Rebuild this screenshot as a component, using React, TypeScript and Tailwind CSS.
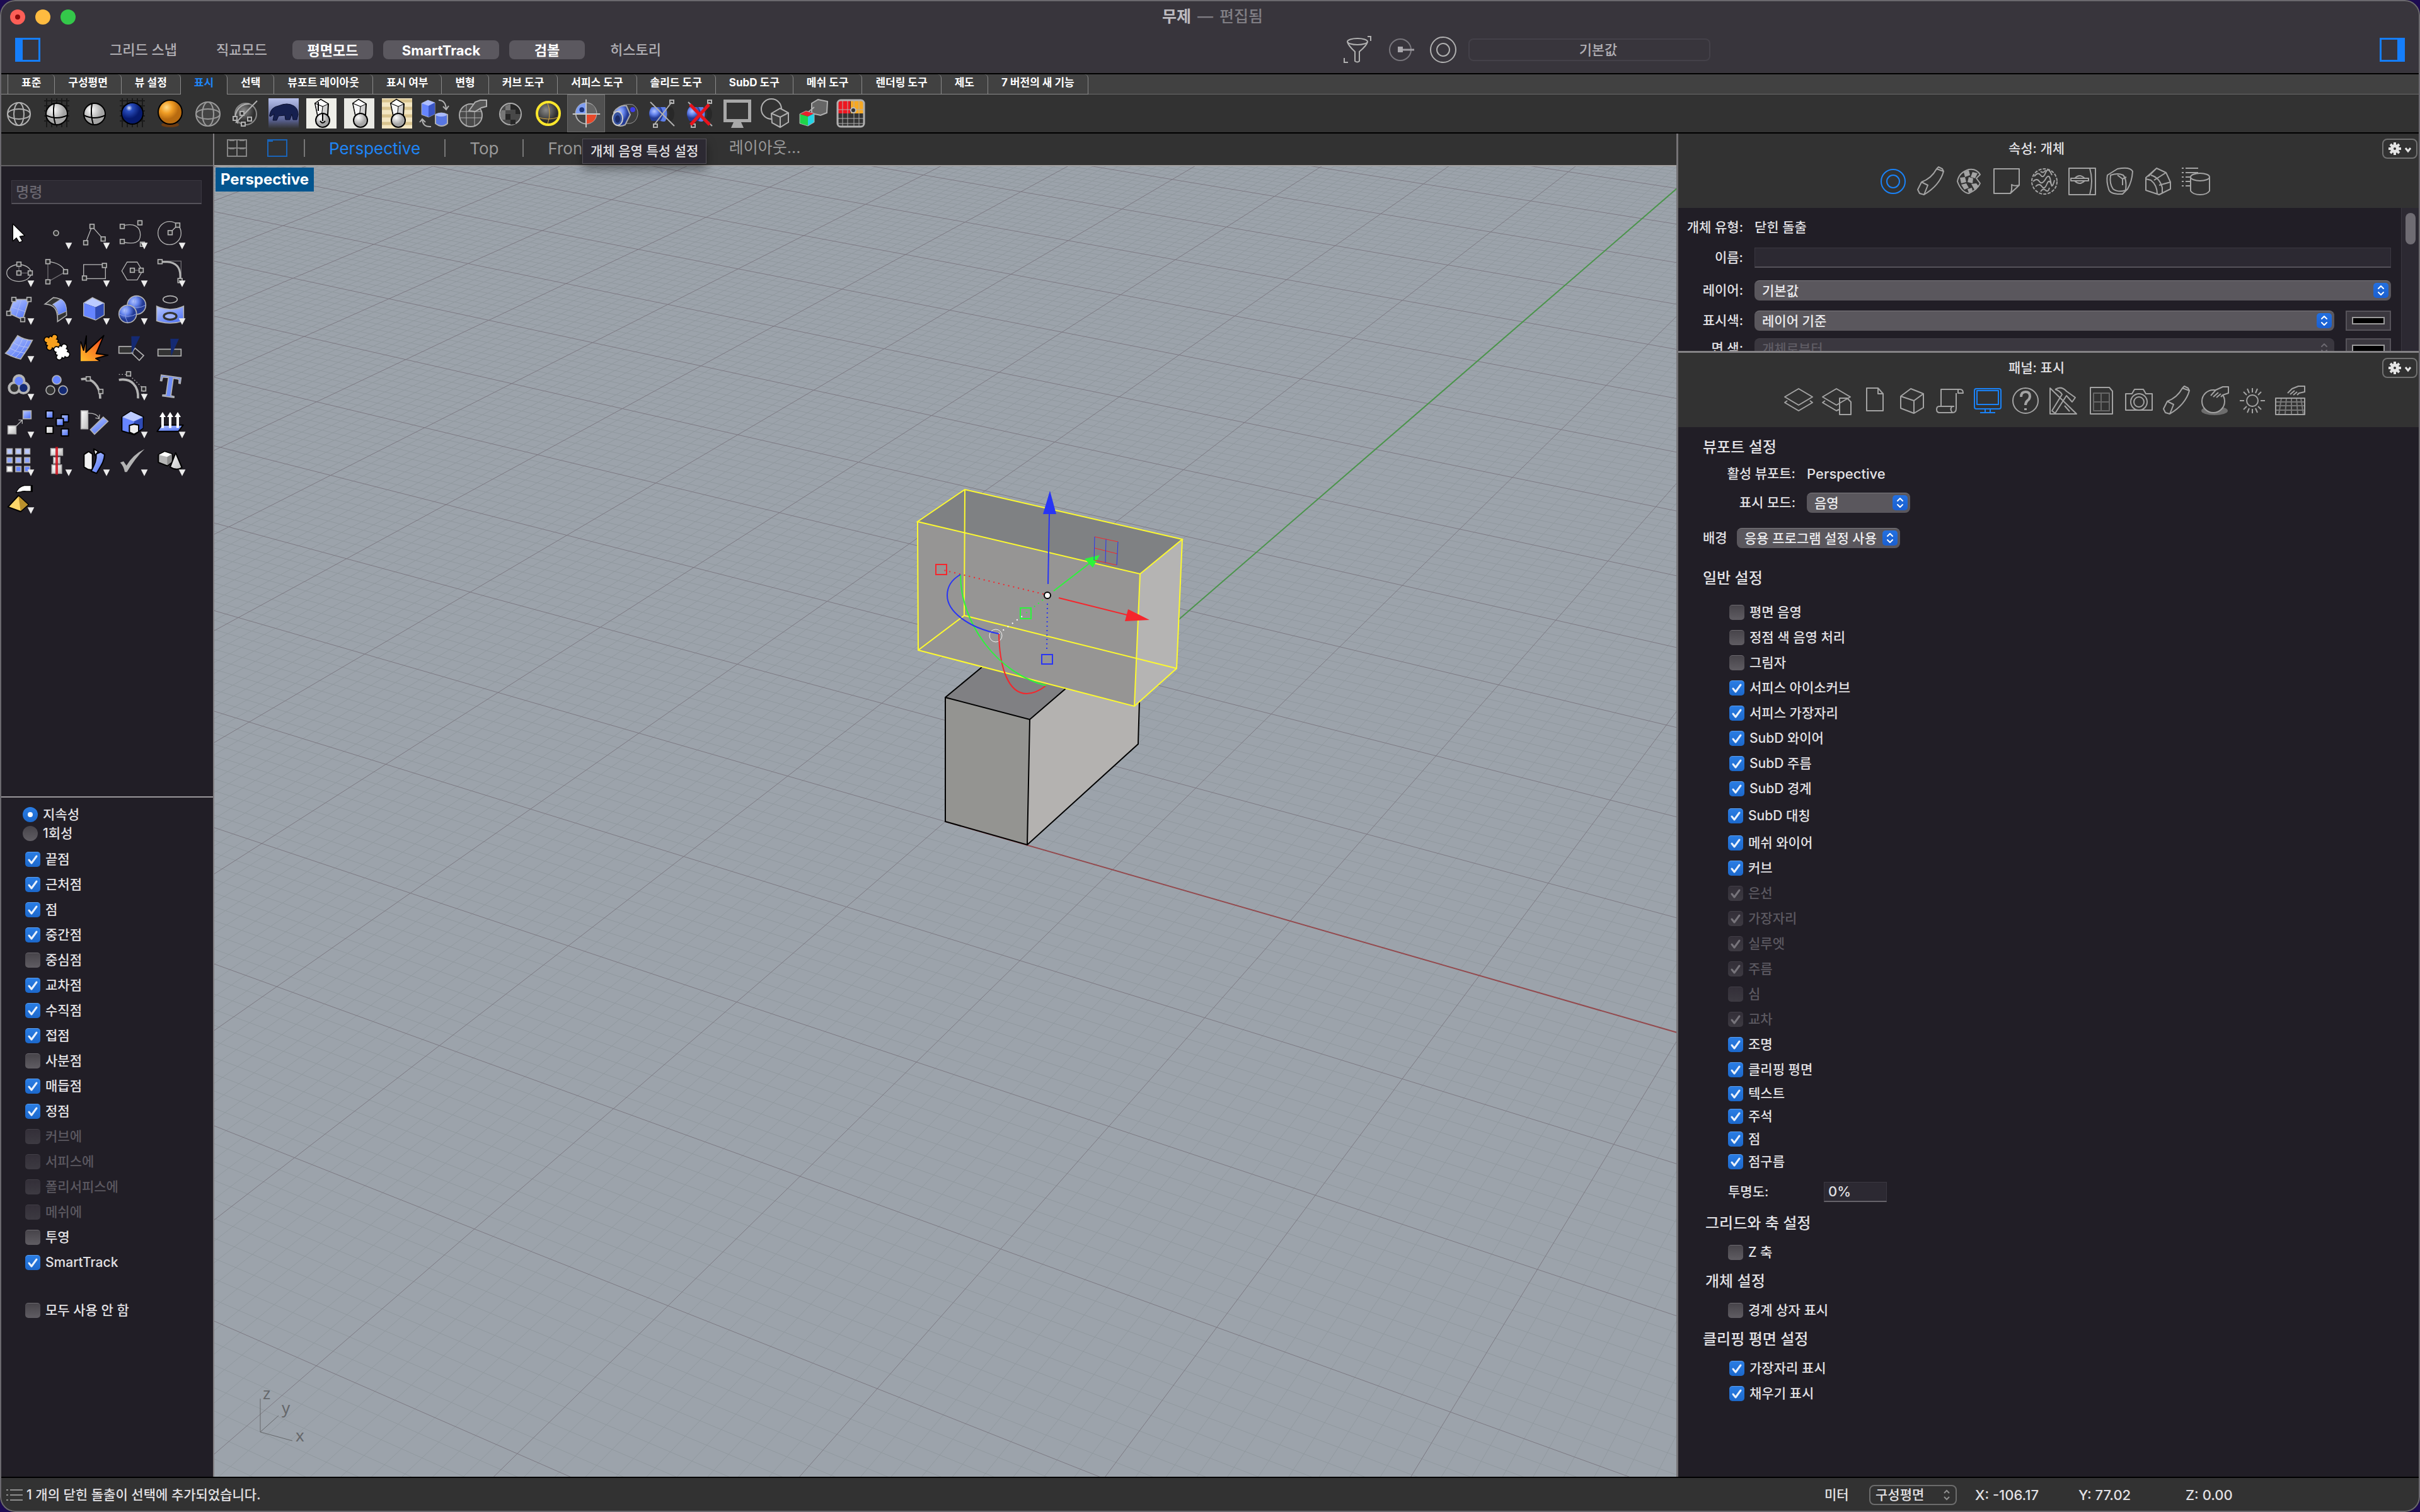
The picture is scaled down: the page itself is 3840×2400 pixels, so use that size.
import { useId, type ReactNode } from "react"

/* ---------- shared data ---------- */

const toolTabs = [
  "표준",
  "구성평면",
  "뷰 설정",
  "표시",
  "선택",
  "뷰포트 레이아웃",
  "표시 여부",
  "변형",
  "커브 도구",
  "서피스 도구",
  "솔리드 도구",
  "SubD 도구",
  "메쉬 도구",
  "렌더링 도구",
  "제도",
  "7 버전의 새 기능",
]

interface CheckItem {
  label: string
  checked?: boolean
  disabled?: boolean
}

const snapItems: CheckItem[] = [
  { label: "끝점", checked: true },
  { label: "근처점", checked: true },
  { label: "점", checked: true },
  { label: "중간점", checked: true },
  { label: "중심점" },
  { label: "교차점", checked: true },
  { label: "수직점", checked: true },
  { label: "접점", checked: true },
  { label: "사분점" },
  { label: "매듭점", checked: true },
  { label: "정점", checked: true },
  { label: "커브에", disabled: true },
  { label: "서피스에", disabled: true },
  { label: "폴리서피스에", disabled: true },
  { label: "메쉬에", disabled: true },
  { label: "투영" },
  { label: "SmartTrack", checked: true },
]

const shadingItems: CheckItem[] = [
  { label: "평면 음영" },
  { label: "정점 색 음영 처리" },
  { label: "그림자" },
  { label: "서피스 아이소커브", checked: true },
  { label: "서피스 가장자리", checked: true },
  { label: "SubD 와이어", checked: true },
  { label: "SubD 주름", checked: true },
  { label: "SubD 경계", checked: true },
]

const wireItems: CheckItem[] = [
  { label: "메쉬 와이어", checked: true },
  { label: "커브", checked: true },
  { label: "은선", checked: true, disabled: true },
  { label: "가장자리", checked: true, disabled: true },
  { label: "실루엣", checked: true, disabled: true },
  { label: "주름", checked: true, disabled: true },
  { label: "심", disabled: true },
  { label: "교차", checked: true, disabled: true },
  { label: "조명", checked: true },
  { label: "클리핑 평면", checked: true },
]

const annotationItems: CheckItem[] = [
  { label: "텍스트", checked: true },
  { label: "주석", checked: true },
  { label: "점", checked: true },
  { label: "점구름", checked: true },
]

/* ---------- form controls ---------- */

function CheckRow({ item, className = "h-10" }: { item: CheckItem; className?: string }) {
  return (
    <label className={`flex items-center gap-2 ${className} ${item.disabled ? "text-[#5b5860]" : "text-[#e2e1e4]"}`}>
      <span className="grid h-6 w-6 shrink-0">
        <input
          type="checkbox"
          defaultChecked={item.checked}
          disabled={item.disabled}
          className="peer h-6 w-6 appearance-none rounded-[5px] border-t border-[#6d6a70] bg-linear-to-b from-[#47444a] to-[#605d63] [grid-area:1/1] checked:border-[#5b9ff0] checked:from-[#2a7de4] checked:to-[#1c68cb] disabled:border-[#434048] disabled:from-[#332f38] disabled:to-[#3d3a42]"
        />
        <svg
          viewBox="0 0 24 24"
          className="pointer-events-none invisible h-6 w-6 text-[#e9f1fc] [grid-area:1/1] peer-checked:visible peer-disabled:text-[#77747b]"
        >
          <path d="M6 13l4 5 8-11" fill="none" stroke="currentColor" strokeWidth="3" strokeLinecap="round" strokeLinejoin="round" />
        </svg>
      </span>
      {item.label}
    </label>
  )
}

function RadioRow({ label, checked }: { label: string; checked?: boolean }) {
  return (
    <label className="flex h-[30px] items-center gap-2">
      <span className="grid h-6 w-6 place-items-center">
        <input
          type="radio"
          name="snap-mode"
          defaultChecked={checked}
          className="peer h-6 w-6 appearance-none rounded-full bg-linear-to-b from-[#47444a] to-[#605d63] [grid-area:1/1] checked:from-[#2a7de4] checked:to-[#1c68cb]"
        />
        <span className="pointer-events-none invisible h-2 w-2 rounded-full bg-white [grid-area:1/1] peer-checked:visible" />
      </span>
      {label}
    </label>
  )
}

interface PopupProps {
  value: string
  id?: string
  className?: string
  disabled?: boolean
}

function Popup({ value, id, className = "", disabled }: PopupProps) {
  return (
    <span className={`relative flex h-8 ${className}`}>
      <select
        id={id}
        disabled={disabled}
        className={`h-8 w-full appearance-none rounded-lg border-t pr-9 pl-3 leading-7 ${
          disabled ? "border-[#434048] bg-[#3a373f] text-[#5f5c64]" : "border-[#7b797e] bg-[#5a575d] text-[#ececee]"
        }`}
      >
        <option>{value}</option>
      </select>
      <span className={`pointer-events-none absolute top-1 right-1 h-6 w-6 rounded-[5px] ${disabled ? "" : "bg-linear-to-b from-[#2370e0] to-[#1b5fcf]"}`}>
        <svg viewBox="0 0 24 24" className="h-6 w-6">
          <path d="M8 9l4-4 4 4M8 15l4 4 4-4" fill="none" stroke={disabled ? "#6b686f" : "#fff"} strokeWidth="2" strokeLinecap="round" strokeLinejoin="round" />
        </svg>
      </span>
    </span>
  )
}

/* ---------- tool palette (180 unit cells, drawn at 60px) ---------- */

const line = { fill: "none", stroke: "#b3b3b3", strokeWidth: 4 }
const dim = { fill: "none", stroke: "#6f6d72", strokeWidth: 4 }
const outline = { stroke: "#b3b3b3", strokeWidth: 5 }
const ink = { stroke: "#000", strokeWidth: 6, strokeLinejoin: "round" as const }

function Knot({ x, y }: { x: number; y: number }) {
  return <rect x={x - 10} y={y - 10} width="20" height="20" fill="#2a2a2c" stroke="#b3b3b3" strokeWidth="5" />
}

function PuzzlePiece({ x, y, color }: { x: number; y: number; color: string }) {
  const shape = (
    <>
      <rect x="-21" y="-21" width="42" height="42" rx="3" />
      <circle cx="0" cy="-27" r="11" />
      <circle cx="-27" cy="0" r="11" />
      <circle cx="27" cy="0" r="11" />
      <circle cx="0" cy="27" r="11" />
    </>
  )
  return (
    <g transform={`translate(${x} ${y}) rotate(26)`} fill={color}>
      <g stroke="#000" strokeWidth="10">
        {shape}
      </g>
      {shape}
    </g>
  )
}

const palette: { name: string; menu?: boolean; art: ReactNode }[] = [
  { name: "선택", art: <path d="M61 46v82l17-15 14 22 15-7-13-22 24-4z" fill="#fff" {...ink} strokeWidth={4} /> },
  { name: "점", menu: true, art: <circle cx="87" cy="90" r="12" fill="#333" {...outline} /> },
  {
    name: "폴리라인",
    menu: true,
    art: (
      <>
        <path d="M48 136L78 58l53 60" {...line} />
        <Knot x={78} y={58} />
        <Knot x={48} y={136} />
        <Knot x={131} y={118} />
      </>
    ),
  },
  {
    name: "커브",
    menu: true,
    art: (
      <>
        <path d="M42 56C100 38 128 62 128 98S100 146 42 132" {...line} />
        <Knot x={42} y={58} />
        <Knot x={42} y={130} />
        <Knot x={126} y={41} />
        <Knot x={138} y={143} />
      </>
    ),
  },
  {
    name: "원",
    menu: true,
    art: (
      <>
        <circle cx="87" cy="90" r="55" {...line} />
        <path d="M90 88l36-36" {...line} />
        <Knot x={126} y={52} />
        <Knot x={90} y={88} />
      </>
    ),
  },
  {
    name: "타원",
    menu: true,
    art: (
      <>
        <ellipse cx="90" cy="100" rx="58" ry="40" {...line} />
        <path d="M90 58v42h54" {...dim} />
        <Knot x={90} y={58} />
        <Knot x={90} y={100} />
        <Knot x={144} y={100} />
      </>
    ),
  },
  {
    name: "호",
    menu: true,
    art: (
      <>
        <path d="M48 46v96l84-48" {...dim} />
        <path d="M48 46q62 4 84 48" {...line} />
        <Knot x={48} y={46} />
        <Knot x={48} y={142} />
        <Knot x={132} y={94} />
      </>
    ),
  },
  {
    name: "직사각형",
    menu: true,
    art: (
      <>
        <rect x="38" y="60" width="104" height="67" {...line} />
        <Knot x={137} y={64} />
        <Knot x={42} y={124} />
      </>
    ),
  },
  {
    name: "다각형",
    menu: true,
    art: (
      <>
        <path d="M40 90l25-42h48l25 42-25 43H65z" {...line} />
        <path d="M90 87h42" {...dim} />
        <Knot x={90} y={87} />
        <Knot x={132} y={87} />
      </>
    ),
  },
  {
    name: "필렛",
    menu: true,
    art: (
      <>
        <path d="M42 43h100v92" {...dim} />
        <path d="M42 47h34q62 4 62 66v20" {...line} strokeWidth={9} />
        <Knot x={42} y={46} />
        <Knot x={137} y={136} />
      </>
    ),
  },
  {
    name: "서피스",
    menu: true,
    art: (
      <>
        <path d="M66 46h72l-30 96-66-30z" fill="url(#blue)" {...outline} />
        <path d="M102 46L76 128M54 82l66 22" {...line} strokeWidth={3} stroke="#a9b8f5" />
        <Knot x={66} y={46} />
        <Knot x={138} y={46} />
        <Knot x={108} y={142} />
        <Knot x={42} y={112} />
      </>
    ),
  },
  {
    name: "로프트",
    menu: true,
    art: (
      <>
        <path d="M34 68l40-31c46 2 63 28 63 85l-43 29c2-56-14-80-60-83z" fill="#333" {...outline} />
        <path d="M70 70l40-26c18 9 26 26 27 58l-40 18c-3-22-10-40-27-50z" fill="url(#blue)" {...outline} strokeWidth={3} />
      </>
    ),
  },
  {
    name: "상자",
    menu: true,
    art: (
      <>
        <path d="M38 63l42-26 56 27-41 19z" fill="#bccbff" />
        <path d="M38 63l57 20v61l-57-20z" fill="#6685ff" />
        <path d="M95 83l41-19v56l-41 24z" fill="#2f4bb5" />
        <path d="M38 63l42-26 56 27v56l-41 24-57-20z" {...line} />
      </>
    ),
  },
  {
    name: "구",
    menu: true,
    art: (
      <>
        <circle cx="110" cy="73" r="44" fill="url(#ball)" {...outline} />
        <path d="M66 73q44 24 88 0M110 29q-26 44 0 88" {...line} strokeWidth={3} stroke="#8ca0e8" />
        <circle cx="68" cy="115" r="42" fill="url(#ball)" {...outline} />
        <path d="M26 115q42 24 84 0M68 73q-24 42 0 84" {...line} strokeWidth={3} stroke="#8ca0e8" />
      </>
    ),
  },
  {
    name: "구멍",
    menu: true,
    art: (
      <>
        <ellipse cx="90" cy="46" rx="34" ry="17" {...line} strokeWidth={5} />
        <path d="M26 78q64 30 128 0v70q-64 22-128 0z" fill="url(#blue)" {...outline} />
        <ellipse cx="90" cy="126" rx="30" ry="16" fill="#9db0ff" stroke="#333" strokeWidth="10" />
      </>
    ),
  },
  {
    name: "메쉬",
    menu: true,
    art: (
      <>
        <path d="M84 38q36 22 70 22l-18 34-38 56q-34-8-72-28 20-18 30-42z" fill="url(#blue)" {...outline} />
        <path d="M108 52q-20 50-58 84M132 58q-20 50-60 86M62 70q30 22 72 24M46 98q34 20 74 24" {...line} strokeWidth={3} stroke="#b6c4f7" />
      </>
    ),
  },
  {
    name: "결합",
    art: (
      <>
        <PuzzlePiece x={68} y={70} color="#f7a01e" />
        <PuzzlePiece x={114} y={116} color="#fff" />
      </>
    ),
  },
  {
    name: "분해",
    art: (
      <>
        <path d="M24 160V66l14 42 13-68-2 78 85-80-36 86 56 7-58 16 20 12z" fill="url(#fire)" />
        <path d="M24 66l14 42 13-68-2 78 85-80-36 86 56 7-58 16 20 12" fill="none" {...ink} />
      </>
    ),
  },
  {
    name: "트림",
    art: (
      <>
        <rect x="26" y="90" width="66" height="32" fill="#333" {...outline} />
        <path d="M103 98l41 35-21 23-37-36z" {...line} strokeWidth={5} />
        <path d="M85 41h42l-40 83z" fill="#142a73" />
      </>
    ),
  },
  {
    name: "분할",
    art: (
      <>
        <rect x="32" y="103" width="110" height="32" fill="#333" {...outline} />
        <path d="M91 53h41L95 135z" fill="#142a73" />
      </>
    ),
  },
  {
    name: "그룹",
    menu: true,
    art: (
      <>
        <g stroke="#b3b3b3" strokeWidth="22">
          <circle cx="90" cy="73" r="20" />
          <circle cx="68" cy="107" r="20" />
          <circle cx="112" cy="107" r="20" />
        </g>
        <circle cx="68" cy="107" r="19" fill="#333" />
        <circle cx="112" cy="107" r="19" fill="#142a73" />
        <circle cx="90" cy="74" r="20" fill="#6685ff" />
      </>
    ),
  },
  {
    name: "그룹 해제",
    art: (
      <>
        <circle cx="90" cy="69" r="21" fill="#6685ff" {...outline} />
        <circle cx="60" cy="118" r="21" fill="#333" {...outline} />
        <circle cx="120" cy="118" r="21" fill="#142a73" {...outline} />
      </>
    ),
  },
  {
    name: "점 편집",
    art: (
      <>
        <path d="M26 66c50-10 92 30 91 92" {...line} strokeWidth={11} />
        <Knot x={60} y={64} />
        <Knot x={120} y={124} />
      </>
    ),
  },
  {
    name: "제어점",
    menu: true,
    art: (
      <>
        <path d="M26 69c60-10 94 30 91 88" {...line} strokeWidth={11} />
        <path d="M26 43h46l72 69v46" {...line} strokeDasharray="5 9" />
        <Knot x={72} y={40} />
        <Knot x={144} y={112} />
      </>
    ),
  },
  {
    name: "텍스트",
    art: (
      <text x="88" y="150" textAnchor="middle" transform="rotate(8 88 100)" className="font-['Liberation_Serif'] text-[150px] font-bold" fill="#6f8df8" stroke="#b3b3b3" strokeWidth="5">
        T
      </text>
    ),
  },
  {
    name: "이동",
    menu: true,
    art: (
      <>
        <rect x="38" y="108" width="38" height="38" fill="url(#white)" {...outline} />
        <rect x="110" y="36" width="38" height="38" fill="url(#blue)" {...outline} />
        <path d="M76 110l30-30M88 80h18v18" {...line} />
      </>
    ),
  },
  {
    name: "복사",
    art: (
      <g {...ink}>
        <rect x="39" y="37" width="34" height="34" fill="url(#blue)" />
        <rect x="112" y="55" width="34" height="34" fill="url(#blue)" />
        <rect x="88" y="73" width="34" height="34" fill="url(#blue)" />
        <rect x="39" y="110" width="34" height="34" fill="url(#white)" />
        <rect x="112" y="122" width="34" height="34" fill="url(#blue)" />
      </g>
    ),
  },
  {
    name: "회전",
    art: (
      <>
        <rect x="26" y="36" width="32" height="86" fill="url(#white)" {...outline} />
        <path d="M132 66l22 20-64 62-20-22z" fill="url(#blue)" {...outline} />
        <path d="M58 48q42-2 54 24M94 70l18 4 2-20" {...line} />
      </>
    ),
  },
  {
    name: "불리언",
    menu: true,
    art: (
      <>
        <path d="M40 66l43-28 59 27-2 55-40 30-60-18z" fill="#6685ff" {...ink} />
        <path d="M42 66l41-26 57 26-44 20z" fill="#bccbff" />
        <path d="M98 88l42-20v50l-42 26z" fill="#2f4bb5" />
        <path d="M76 106l22-6 22 4v32l-22 12-22-10z" fill="#eee" {...ink} />
      </>
    ),
  },
  {
    name: "노멀",
    menu: true,
    art: (
      <>
        <path d="M50 104h102l-22 30H28z" fill="url(#blue)" {...ink} />
        <path d="M54 118V62M90 118V62M126 118V62" stroke="#fff" strokeWidth="12" />
        <path d="M39 66l15-24 15 24zM75 66l15-24 15 24zM111 66l15-24 15 24z" fill="#fff" />
      </>
    ),
  },
  {
    name: "배열",
    menu: true,
    art: (
      <g {...outline}>
        <rect x="33" y="37" width="25" height="25" fill="#b9c7ff" />
        <rect x="75" y="37" width="25" height="25" fill="#b9c7ff" />
        <rect x="117" y="37" width="25" height="25" fill="#b9c7ff" />
        <rect x="33" y="79" width="25" height="25" fill="#8ea5ff" />
        <rect x="75" y="79" width="25" height="25" fill="#9db0ff" />
        <rect x="117" y="79" width="25" height="25" fill="#8ea5ff" />
        <rect x="33" y="121" width="25" height="25" fill="#f4f4f4" />
        <rect x="75" y="121" width="25" height="25" fill="#6685ff" />
        <rect x="117" y="121" width="25" height="25" fill="#6685ff" />
      </g>
    ),
  },
  {
    name: "정렬",
    menu: true,
    art: (
      <>
        <rect x="62" y="36" width="56" height="32" fill="url(#white)" {...outline} />
        <rect x="75" y="78" width="30" height="28" fill="url(#white)" {...outline} />
        <rect x="67" y="114" width="46" height="40" fill="url(#white)" {...outline} />
        <path d="M90 28v132" stroke="#d0101c" strokeOpacity=".85" strokeWidth="12" />
      </>
    ),
  },
  {
    name: "변형",
    menu: true,
    art: (
      <>
        <path d="M40 64l22-14 18 12v76l-20-2-20-12z" fill="#f1f1f1" {...ink} />
        <path d="M86 38l22 12-16 20z" fill="#eee" {...ink} />
        <path d="M98 62l22-10 18 12c-2 36-18 54-38 90l-26-10c14-30 26-48 24-82z" fill="url(#blue)" {...ink} />
      </>
    ),
  },
  { name: "확인", menu: true, art: <path d="M32 103l16-6 14 20q30-52 86-79-44 42-84 110H54q-6-30-22-45z" fill="#b3b3b3" /> },
  {
    name: "분석",
    menu: true,
    art: (
      <>
        <path d="M34 66l30-16 36 12v38l-24 18-42-16z" fill="#b5b5b5" {...ink} />
        <path d="M36 66l28-14 34 11-22 13z" fill="#fff" />
        <path d="M76 76l22-13v36l-22 17z" fill="#8c8c8c" />
        <path d="M116 56l30 70q-24 18-56-2z" fill="url(#white)" {...ink} />
      </>
    ),
  },
  {
    name: "피라미드",
    menu: true,
    art: (
      <>
        <path d="M76 66q14-30 40-34h38v28h-28q-16-2-26 2z" fill="#fff" {...ink} strokeWidth={4} />
        <path d="M146 30h10v32h-10z" />
        <path d="M88 80l47 43-37 33-60-22z" fill="#fcd76a" {...ink} />
        <path d="M88 82l45 41-35 31z" fill="#b9902c" />
      </>
    ),
  },
]

function PaletteDefs() {
  return (
    <svg className="absolute h-0 w-0" aria-hidden="true">
      <defs>
        <linearGradient id="blue" x1="0" y1="0" x2=".7" y2="1">
          <stop offset="0" stopColor="#b9c8ff" />
          <stop offset="1" stopColor="#5476f5" />
        </linearGradient>
        <linearGradient id="white" x1="0" y1="0" x2="1" y2="1">
          <stop offset="0" stopColor="#fff" />
          <stop offset="1" stopColor="#bdbdbd" />
        </linearGradient>
        <linearGradient id="fire" x1="0" y1="1" x2="1" y2="0">
          <stop offset="0" stopColor="#ffbf2b" />
          <stop offset=".9" stopColor="#f3431c" />
        </linearGradient>
        <linearGradient id="sky" x1="0" y1="0" x2="0" y2="1">
          <stop offset="0" stopColor="#b7c0ea" />
          <stop offset=".7" stopColor="#5c6598" />
          <stop offset="1" stopColor="#323232" />
        </linearGradient>
        <radialGradient id="ball" cx=".35" cy=".3">
          <stop offset="0" stopColor="#b4c6ff" />
          <stop offset=".5" stopColor="#6685ee" />
          <stop offset="1" stopColor="#233a94" />
        </radialGradient>
        <radialGradient id="pearl" cx=".35" cy=".3">
          <stop offset="0" stopColor="#fff" />
          <stop offset="1" stopColor="#a5a5a5" />
        </radialGradient>
        <radialGradient id="navy" cx=".35" cy=".25">
          <stop offset="0" stopColor="#dfe8ff" />
          <stop offset=".3" stopColor="#2a4fc0" />
          <stop offset="1" stopColor="#061a6e" />
        </radialGradient>
        <radialGradient id="orange" cx=".35" cy=".3">
          <stop offset="0" stopColor="#ffdc8a" />
          <stop offset=".5" stopColor="#f09d25" />
          <stop offset="1" stopColor="#b86b10" />
        </radialGradient>
        <radialGradient id="steel" cx=".4" cy=".35">
          <stop offset="0" stopColor="#8a8a8a" />
          <stop offset="1" stopColor="#2e2e2e" />
        </radialGradient>
      </defs>
    </svg>
  )
}

/* ---------- display toolbar (60 unit cells) ---------- */

const gray = { fill: "none", stroke: "#b0b0b0", strokeWidth: 2 }
const black = { stroke: "#000", strokeWidth: 2, fill: "none" }
const hatch = <path d="M10 10h40M10 18h40M10 26h40M10 34h40M10 42h40M14 6v46M22 6v46M30 6v46M38 6v46M46 6v46" stroke="#1b1b1b" strokeWidth="2" />

function PenAndBall({ bg, striped, sketchy }: { bg: string; striped?: boolean; sketchy?: boolean }) {
  return (
    <>
      <path d="M6 6h48v48H6z" fill={bg} />
      {striped && <path d="M6 10h48M6 22h48M6 34h48M6 46h48" stroke="#d9c48f" strokeWidth="5" />}
      <path d="M20 14l9-6 12 7-1 18-9 4-7-4z" fill="#d2d2d2" stroke="#000" strokeWidth="2" />
      <path d="M20 14l12 5-2 18-6-4z" fill="#f7f7f7" stroke="#000" />
      <path d="M20 14l9-6 12 7-9 4z" fill="#fff" stroke="#000" />
      <circle cx="32" cy="41" r="11" fill="url(#pearl)" stroke="#000" strokeWidth="2" />
      {sketchy && <path d="M32 30v12M28 42q4 6 8 0M25 12v14" {...black} />}
    </>
  )
}

const cylinder = (
  <>
    <path d="M14 20q-8 10 0 22h16q7-11 0-22z" fill="url(#ball)" />
    <path d="M28 20q8 11 0 22 6 2 8 0 5-11 0-22z" fill="#5d7ee8" />
    <path d="M36 20q12 11 0 22h10q8-11 0-22z" fill="#222" opacity=".6" />
  </>
)

const displayTools: { name: string; active?: boolean; art: ReactNode }[] = [
  {
    name: "와이어프레임",
    art: (
      <g {...gray}>
        <circle cx="30" cy="31" r="18" />
        <ellipse cx="30" cy="31" rx="8" ry="18" />
        <ellipse cx="30" cy="31" rx="18" ry="8" />
      </g>
    ),
  },
  {
    name: "음영",
    art: (
      <>
        {hatch}
        <circle cx="30" cy="31" r="17" fill="url(#pearl)" stroke="#000" strokeWidth="2" />
        <path d="M26 14q-3 17 2 34M13 33q17 8 34 0" {...black} />
      </>
    ),
  },
  {
    name: "모든 뷰포트 음영",
    art: (
      <>
        <circle cx="30" cy="31" r="17" fill="url(#pearl)" stroke="#000" strokeWidth="2" />
        <path d="M26 14q-3 17 2 34M13 33q17 8 34 0" {...black} />
      </>
    ),
  },
  {
    name: "렌더링",
    art: (
      <>
        {hatch}
        <circle cx="30" cy="30" r="17" fill="url(#navy)" stroke="#000" strokeWidth="2" />
      </>
    ),
  },
  {
    name: "모든 뷰포트 렌더링",
    art: (
      <>
        <ellipse cx="30" cy="48" rx="14" ry="4" fill="#6d3c12" />
        <circle cx="30" cy="28" r="19" fill="url(#orange)" stroke="#000" strokeWidth="2" />
      </>
    ),
  },
  {
    name: "고스트",
    art: (
      <g {...gray} stroke="#999">
        <circle cx="30" cy="31" r="19" fill="#444" />
        <ellipse cx="30" cy="31" rx="9" ry="19" />
        <ellipse cx="30" cy="31" rx="19" ry="8" />
      </g>
    ),
  },
  {
    name: "엑스레이",
    art: (
      <g {...gray}>
        <circle cx="30" cy="31" r="17" fill="url(#steel)" stroke="#888" />
        <path d="M18 46q-8-8-2-20 7-12 20-11M14 45L48 10" />
        <path d="M21 27h6v6h-6zM33 36h6v6h-6zM10 35h6v6h-6zM23 44h6v6h-6z" fill="#333" />
      </g>
    ),
  },
  {
    name: "북극",
    art: (
      <>
        <path d="M6 6h48v48H6z" fill="url(#sky)" />
        <path d="M8 32q2-12 14-14 14-6 24 0 7 4 7 14l-2 8h-6l-2-9-3 9h-7l-1-7-10 1-3 7h-6l2-10-6 4q-2 0-1-3z" fill="#16204f" stroke="#0a0f2c" />
      </>
    ),
  },
  { name: "펜", art: <PenAndBall bg="#efefe9" sketchy /> },
  { name: "테크니컬", art: <PenAndBall bg="#e9e9e4" /> },
  { name: "아티스틱", art: <PenAndBall bg="#f3e6c2" striped /> },
  {
    name: "개체 표시 모드",
    art: (
      <>
        <path d="M9 14l10-5 11 4v18l-10 5-11-4z" fill="#6685ff" stroke="#b0b0b0" />
        <path d="M9 14l10-5 11 4-10 5z" fill="#aebeff" />
        <path d="M20 18l10-5v18l-10 5z" fill="#3a55c4" />
        <path d="M31 32q9-5 19 0v14q-9 8-19 0z" fill="#5877e2" stroke="#b0b0b0" strokeWidth="2" />
        <ellipse cx="40" cy="32" rx="9" ry="3" fill="#a9bafb" />
        <path d="M36 9q11 0 12 14M43 19l5 5 4-6M24 51Q11 52 10 40M6 44l4-5 5 5" {...gray} />
      </>
    ),
  },
  {
    name: "표시 모드 설정",
    art: (
      <>
        <circle cx="27" cy="33" r="18" fill="#4a4a4a" stroke="#aaa" strokeWidth="2" />
        <path d="M10 27h34M9 37h36M20 16v35M33 17v33" {...gray} strokeWidth={1} />
        <path d="M24 26l10-14 8-3h10v10l-8 2-10 6z" fill="#555" stroke="#b0b0b0" strokeWidth="2" />
      </>
    ),
  },
  {
    name: "플랫 음영",
    art: (
      <>
        <circle cx="30" cy="31" r="17" fill="#484848" stroke="#aaa" strokeWidth="2" />
        <path d="M22 18l8-3v10h-8zM14 31h8v9h-6l-2-6zM22 25h-6l-2 6h8z" fill="#777" />
        <path d="M30 15q15 2 16 16h-8v-7h-8zM22 31h8v9h-8zM30 40h8v7l-8 1z" fill="#262626" />
      </>
    ),
  },
  {
    name: "선택 강조",
    art: (
      <>
        <circle cx="30" cy="30" r="18" fill="url(#steel)" stroke="#fce72c" strokeWidth="4" />
        <path d="M29 14q6 16 0 32M14 36q16 6 32 0" fill="none" stroke="#d8a93c" strokeWidth="1" />
      </>
    ),
  },
  {
    name: "개체 음영 특성 설정",
    active: true,
    art: (
      <>
        <circle cx="30" cy="30" r="17" fill="#444" stroke="#b0b0b0" strokeWidth="2" />
        <path d="M30 30V13q-16 1-17 17z" fill="#7f9ef2" />
        <path d="M30 30v17q16-1 17-17z" fill="#e8492a" />
        <path d="M30 30V13q16 1 17 17z" fill="#666" />
        <circle cx="23" cy="24" r="4" fill="#1c347f" />
        <path d="M30 7v46M8 31h45" stroke="#c9c9c9" strokeWidth="2" />
      </>
    ),
  },
  {
    name: "두께",
    art: (
      <>
        <path d="M22 20q10-6 22-4 9 5 8 16-2 12-12 14H26z" fill="#3c3c3c" stroke="#999" />
        <path d="M14 28q8-12 20-10l6 14-8 16q-8 4-14 0z" fill="url(#ball)" stroke="#aaa" strokeWidth="2" />
        <ellipse cx="20" cy="38" rx="8" ry="11" fill="#35519f" stroke="#ccc" strokeWidth="2" />
        <ellipse cx="20" cy="39" rx="4" ry="6" fill="#1b2c66" />
        <circle cx="44" cy="24" r="4" fill="#3d3de8" />
      </>
    ),
  },
  {
    name: "클리핑 평면",
    art: (
      <>
        {cylinder}
        <path d="M12 12l38 38M18 48L46 12" {...gray} />
        <path d="M43 9h6v5h-6zM17 47h6v5h-6z" {...gray} />
      </>
    ),
  },
  {
    name: "클리핑 평면 해제",
    art: (
      <>
        {cylinder}
        <path d="M12 12l38 38M18 48L46 12" {...gray} />
        <path d="M43 9h6v5h-6zM17 47h6v5h-6z" {...gray} />
        <path d="M15 16l31 32M45 16L16 48" stroke="#e8131c" strokeWidth="5" />
      </>
    ),
  },
  {
    name: "전체 화면",
    art: (
      <>
        <path d="M8 8h44v36H8z" fill="#a8a8a8" />
        <path d="M13 13h34v26H13z" fill="#333" />
        <path d="M24 44h12l4 9H20z" fill="#a8a8a8" />
      </>
    ),
  },
  {
    name: "윤곽선",
    art: (
      <>
        <circle cx="24" cy="23" r="16" {...gray} />
        <path d="M24 30l14-8 13 7v15l-13 8-13-7z" fill="#3c3c3c" stroke="#b0b0b0" strokeWidth="2" />
        <path d="M24 30l14 6 13-7M38 36v15" {...gray} />
      </>
    ),
  },
  {
    name: "색 보기",
    art: (
      <>
        <path d="M28 14l10-6 15 3-1 18-10 4-14-3z" fill="#666" stroke="#b0b0b0" strokeWidth="2" />
        <path d="M20 30l12-10" {...gray} />
        <path d="M9 31l10-5 13 4-10 5z" fill="#e8202c" />
        <path d="M9 31l13 4v15L9 46z" fill="#1fd44a" />
        <path d="M22 35l10-5v14l-10 6z" fill="#25d3e6" />
        <path d="M9 31l10-5 13 4v14l-10 6-13-4z" {...gray} strokeWidth={1} />
      </>
    ),
  },
  {
    name: "표시 색상",
    art: (
      <>
        <rect x="9" y="9" width="42" height="42" rx="5" fill="#333" />
        <path d="M10 14q0-4 4-4h15v20H10z" fill="#ee1620" />
        <path d="M30 10h16q4 0 4 4v16H30z" fill="#f6a823" />
        <path d="M9 24h42M9 38h42M9 46h42M17 9v42M25 9v42M35 9v42M43 9v42" {...gray} strokeWidth={1} />
        <rect x="9" y="9" width="42" height="42" rx="5" {...gray} strokeWidth={3} />
        <circle cx="34" cy="25" r="4" fill="#333" stroke="#bbb" strokeWidth="2" />
      </>
    ),
  },
]

/* ---------- panel header icons (60 unit cells) ---------- */

const tube = <path d="M9 43l6-12 10 5-6 15-7-2zM15 31Q31 25 39 10l11 4Q44 36 19 51M39 10l3-3 6 3 2 4" />

const propertyTabs: { name: string; active?: boolean; art: ReactNode }[] = [
  {
    name: "개체",
    active: true,
    art: (
      <>
        <circle cx="30" cy="30" r="19" />
        <circle cx="30" cy="30" r="10" />
      </>
    ),
  },
  { name: "재질", art: tube },
  {
    name: "텍스처 매핑",
    art: (
      <>
        <path d="M12 30q2-14 18-19 12-2 18 8l-6 6 6 8q-4 10-18 16-12-2-18-19z" />
        <path d="M22 15l8-3 2 8-8 3zM36 15l8 2-4 8-7-2zM16 24l8-1 2 8-8 2zM30 23l7 2-1 8-8-2zM18 35l8-2 4 7-7 3zM34 34l8-1 4 5-7 5zM28 42l7-2 1 5-6 3z" fill="currentColor" stroke="none" />
      </>
    ),
  },
  { name: "데칼", art: <path d="M10 10h40v26L36 49H10zM50 36q-8 2-12-1 1 9-2 14" /> },
  {
    name: "변위",
    art: (
      <>
        <circle cx="30" cy="30" r="20" strokeDasharray="5 2" />
        <path d="M14 22q6-8 10-2t8-4 10 4M12 30q6-6 10 0t10-4 8 4 6-2M16 38q6-6 10 0t8-4 8 4M24 46q4-6 8-2t6-4M24 14q4 4 8-2" />
      </>
    ),
  },
  {
    name: "가장자리 연화",
    art: (
      <>
        <path d="M9 9h42v42H9zM42 9q6 20 0 42" />
        <path d="M12 25h28v4H12zM18 25q8-8 16 0M18 29q8 8 16 0" />
      </>
    ),
  },
  {
    name: "두께",
    art: (
      <>
        <path d="M10 20l16-10q20-4 24 4-1 16-8 28l-8 8q-20 1-22-8-4-12-2-22z" />
        <path d="M15 20q12-4 20 0 6 6 4 24-12 4-20-2-6-8-4-22zM26 20l8 6v10M34 26l6-3" />
      </>
    ),
  },
  { name: "커브 파이핑", art: <path d="M28 9l15 7 7 15v11L32 51 11 44V24zM11 26l8 2q10 8 10 22M28 9L15 22M19 20q14 4 18 20v9M24 28l19-12M32 36l18-5" /> },
  {
    name: "사용자 텍스트",
    art: (
      <>
        <path d="M8 9h3M14 9h20M8 16h3M14 16h20M8 23h3M14 23h8M8 30h3M14 30h8M8 37h3M14 37h8" />
        <ellipse cx="37" cy="23" rx="15" ry="6" />
        <path d="M22 23v22q4 6 15 6t15-6V23" />
      </>
    ),
  },
]

const displayTabs: { name: string; active?: boolean; art: ReactNode }[] = [
  { name: "레이어", art: <path d="M30 11l22 13-22 13L8 24zM12 30l-4 3 22 13 22-13-4-3" /> },
  { name: "레이어 상태", art: <path d="M30 11l22 13-22 13L8 24zM12 30l-4 3 22 13 4-2M35 26h12l6 6v20H35z" /> },
  { name: "새 파일", art: <path d="M18 10h18l8 9v27H18zM36 10v9h8" /> },
  { name: "블록", art: <path d="M12 23l16-12 20 8v22L33 50 12 42zM12 23l21 7 15-11M33 30v20" /> },
  { name: "스크립트", art: <path d="M16 40V12h30q5 0 5 6h-8V12M40 18v24q0 7-6 7H14q-5 0-5-5t4-5h24M34 39q-5 4 0 10" /> },
  {
    name: "표시",
    active: true,
    art: (
      <>
        <rect x="9" y="11" width="42" height="32" rx="3" />
        <path d="M13 14h34v22H13zM26 43v6M34 43v6M18 49h24" />
      </>
    ),
  },
  {
    name: "도움말",
    art: (
      <>
        <circle cx="30" cy="30" r="20" />
        <path d="M23 24q0-8 7-8t7 7q0 4-4 7-3 3-3 7M30 42v3" strokeWidth="4" />
      </>
    ),
  },
  { name: "도구", art: <path d="M9 51V10l42 41zM17 12q10-6 18 3l14 10-5 7-9-10-18 28-5-4 16-26q-4-6-11-8M32 38l8 9" /> },
  {
    name: "레이아웃",
    art: (
      <>
        <path d="M13 9h30l5 6v36H13z" />
        <path d="M18 18h25v28H18zM30 18v28M18 32h25" stroke="#666" />
      </>
    ),
  },
  {
    name: "카메라",
    art: (
      <>
        <path d="M9 19h10l4-7h14l4 7h10v26H9z" />
        <circle cx="30" cy="32" r="13" />
        <circle cx="30" cy="32" r="8" />
      </>
    ),
  },
  { name: "재질", art: tube },
  {
    name: "환경",
    art: (
      <>
        <ellipse cx="30" cy="46" rx="21" ry="7" fill="#6d6d6d" stroke="none" />
        <circle cx="28" cy="31" r="18" fill="#323232" />
        <path d="M24 22l8-9 11-5h9v10l-9 3-3 3M28 24l8-7M33 25l7-6" fill="#323232" />
      </>
    ),
  },
  {
    name: "태양",
    art: (
      <>
        <circle cx="30" cy="30" r="9" />
        <path d="M30 10v7M30 43v7M10 30h7M43 30h7M16 16l5 5M39 39l5 5M16 44l5-5M39 21l5-5M22 11l3 7M35 42l3 7M22 49l3-7M35 18l3-7" />
      </>
    ),
  },
  {
    name: "그라운드 평면",
    art: (
      <>
        <path d="M7 32h46M7 38h46M7 45h46M16 26l-4 26M24 26l-2 26M32 26v26M40 26l2 26M47 26l4 26" stroke="#777" />
        <path d="M7 26h46v26H7z" />
        <path d="M26 18l7-7 10-4h10v9l-9 2-3 3M30 20l7-6M35 21l6-5" />
      </>
    ),
  },
]

function PanelHeader({ title, tabs }: { title: string; tabs: typeof propertyTabs }) {
  return (
    <header className="relative h-[118px] shrink-0 bg-[#323232]">
      <h2 className="flex h-12 items-center justify-center pr-10">{title}</h2>
      <nav className="flex h-14 items-center justify-center pr-4">
        {tabs.map((tab) => (
          <button key={tab.name} aria-label={tab.name} className={tab.active ? "text-[#1a82f7]" : "text-[#a3a3a3]"}>
            <svg viewBox="0 0 60 60" className="h-[60px] w-[60px]" fill="none" stroke="currentColor" strokeWidth="2" strokeLinejoin="round">
              {tab.art}
            </svg>
          </button>
        ))}
      </nav>
      <button aria-label={`${title} 설정`} className="absolute top-2 right-1 flex h-8 w-14 items-center justify-center rounded-lg border-2 border-[#727272]">
        <svg viewBox="0 0 44 24" className="h-6 w-11">
          <g stroke="#e4e4e4" strokeWidth="4">
            <path d="M14 2v20M4 12h20M7 5l14 14M21 5L7 19" />
          </g>
          <circle cx="14" cy="12" r="7" fill="#e4e4e4" />
          <circle cx="14" cy="12" r="2" fill="#323232" />
          <path d="M31 11l4 5 4-5" fill="none" stroke="#e4e4e4" strokeWidth="3" />
        </svg>
      </button>
    </header>
  )
}

/* ---------- perspective viewport ---------- */

// Construction plane to screen: origin plus the vanishing points of both axes.
const origin = [1500, 1304]
const vanishX = [-7228, -1214]
const vanishY = [4409, -1214]
const stepX = -0.0295
const stepY = 0.05109

function project(i: number, j: number) {
  const a = stepX * i
  const b = stepY * j
  const w = 1 + a + b
  const x = (origin[0] + a * vanishX[0] + b * vanishY[0]) / w
  const y = (origin[1] + a * vanishX[1] + b * vanishY[1]) / w
  return `${x.toFixed(1)} ${y.toFixed(1)}`
}

function gridPath(major: boolean) {
  let d = ""
  for (let n = -120; n <= 60; n++) {
    if ((n % 10 === 0) === major) d += `M${project(n / 10, -6)}L${project(n / 10, 15)}`
  }
  for (let n = -60; n <= 150; n++) {
    if ((n % 10 === 0) === major) d += `M${project(-12, n / 10)}L${project(6, n / 10)}`
  }
  return d
}

function Scene() {
  return (
    <svg viewBox="340 264 2320 2080" preserveAspectRatio="xMinYMin slice" className="block h-full w-full">
      <rect x="340" y="264" width="2320" height="2080" fill="#9ca3ab" />
      <path d={gridPath(false)} stroke="#91999f" strokeWidth="1" />
      <path d={gridPath(true)} stroke="#7d7a83" strokeWidth="1" />
      <path d={`M${project(0, 0)}L${project(0, 15)}`} stroke="#4a944a" strokeWidth="2" />
      <path d={`M${project(0, 0)}L${project(6, 0)}`} stroke="#944a4e" strokeWidth="2" />

      {/* lower box */}
      <path d="M1500 1107L1634 1142 1630 1341 1500 1304z" fill="#949491" />
      <path d="M1500 1107L1572 1049 1702 1085 1634 1142z" fill="#808083" />
      <path d="M1634 1142L1702 1085 1809 1095 1806 1181 1630 1341z" fill="#b4b2b0" />
      <path
        d="M1558 1059L1500 1107 1500 1304 1630 1341 1806 1181 1808 1112M1500 1107L1634 1142 1630 1341M1634 1142L1691 1093"
        fill="none"
        stroke="#000"
        strokeWidth="2"
      />

      {/* selected box */}
      <path d="M1456 828L1531 777 1876 856 1809 911z" fill="#7f8183" />
      <path d="M1456 828L1809 911 1800 1121 1457 1032z" fill="#969594" />
      <path d="M1809 911L1876 856 1867 1061 1800 1121z" fill="#b5b4b3" />
      <path
        d="M1456 828L1531 777 1876 856 1809 911zM1456 828L1457 1032 1800 1121 1867 1061 1876 856M1809 911L1800 1121M1531 777L1530 977 1457 1032M1530 977L1867 1061"
        fill="none"
        stroke="#fdfa2f"
        strokeWidth="2"
      />

      {/* gumball */}
      <g fill="none" strokeWidth="2">
        <path d="M1663 927L1665 816" stroke="#2834f5" />
        <path d="M1666 779L1655 816H1676z" fill="#2834f5" />
        <path d="M1672 938L1729 894" stroke="#2cf53a" />
        <path d="M1745 881L1721 887 1734 901z" fill="#2cf53a" />
        <path d="M1680 949L1788 976" stroke="#f5262c" />
        <path d="M1824 984L1790 967 1785 986z" fill="#f5262c" />
        <path d="M1656 943L1493 904" stroke="#f5262c" strokeDasharray="2 6" />
        <path d="M1655 952L1627 974" stroke="#2cf53a" strokeDasharray="2 6" />
        <path d="M1622 978L1580 1009" stroke="#fff" strokeDasharray="2 7" />
        <path d="M1662 958L1661 1032" stroke="#2834f5" strokeDasharray="2 5" />
        <rect x="1485" y="896" width="17" height="16" stroke="#f5262c" />
        <rect x="1619" y="965" width="17" height="17" stroke="#2cf53a" />
        <rect x="1653" y="1039" width="17" height="15" stroke="#2834f5" />
        <circle cx="1580" cy="1009" r="10" stroke="#f0f0f0" strokeWidth="1" />
        <path d="M1585 1006C1586 1060 1600 1101 1629 1101 1640 1101 1650 1096 1660 1088" stroke="#f5262c" />
        <path d="M1524 912C1524 990 1584 1070 1660 1088" stroke="#2cf53a" />
        <path d="M1524 912C1510 920 1503 932 1503 945 1503 970 1535 996 1585 1006" stroke="#2834f5" />
        <g strokeWidth="1">
          <path d="M1737 852L1774 860M1737 870L1773 879M1736 889L1772 897" stroke="#f5262c" />
          <path d="M1737 852L1736 889M1755 856L1754 893M1774 860L1772 897" stroke="#2834f5" />
        </g>
        <circle cx="1662" cy="945" r="5" fill="#fff" stroke="#000" />
      </g>

      {/* axis marker */}
      <path d="M413 2220v53l29-26M413 2273l51 14" fill="none" stroke="#66686b" strokeWidth="1" />
      <g fill="#66686b" className="font-['Noto_Sans'] text-[26px] font-normal">
        <text x="417" y="2221">z</text>
        <text x="447" y="2244">y</text>
        <text x="469" y="2288">x</text>
      </g>
    </svg>
  )
}

function ViewBar() {
  const tab = "text-[26px] text-[#9a9a9a]"
  return (
    <nav className="relative flex h-[50px] shrink-0 items-center bg-[#323232] pb-1 pl-5 font-normal">
      <button aria-label="네 뷰포트" className="mr-8 h-8 w-8">
        <svg viewBox="0 0 32 32" {...gray} stroke="#858585">
          <path d="M1 3h30v26H1zM16 3v26M1 16h30M4 4h8M20 4h8M4 17h8M20 17h8" />
        </svg>
      </button>
      <button aria-label="단일 뷰포트" className="h-8 w-8">
        <svg viewBox="0 0 32 32" fill="none" stroke="#1a64b8" strokeWidth="2">
          <path d="M1 3h30v26H1zM1 5h8" />
        </svg>
      </button>
      <span className="mr-[38px] ml-[26px] h-7 w-0.5 bg-[#777]" />
      <button className="text-[26px] text-[#1f85f5]">Perspective</button>
      <span className="mx-[38px] h-7 w-0.5 bg-[#777]" />
      <button className={tab}>Top</button>
      <span className="mx-[38px] h-7 w-0.5 bg-[#777]" />
      <button className={tab}>Front</button>
      <button className="ml-56 text-[25px] text-[#9a9a9a]">레이아웃...</button>
      <div role="tooltip" className="absolute top-2 left-[584px] z-10 flex h-10 items-center border border-[#55525a] bg-[#2c2932] px-3 font-medium whitespace-nowrap shadow-[0_8px_16px_rgba(0,0,0,0.4)]">
        개체 음영 특성 설정
      </div>
    </nav>
  )
}

/* ---------- window chrome ---------- */

function TitleBar() {
  const toggle = "h-[30px] rounded-lg bg-[#5b585f] text-[22px] font-bold text-white"
  return (
    <header className="h-[116px] shrink-0 bg-[#38353c] text-[22px] text-[#b1afb4]">
      <div className="grid h-[54px] grid-cols-3 items-center px-4">
        <div className="flex gap-4">
          <button aria-label="닫기" className="grid h-6 w-6 place-items-center rounded-full bg-[#fe5f57]">
            <span className="h-2 w-2 rounded-full bg-[#8c0a0a]" />
          </button>
          <button aria-label="최소화" className="h-6 w-6 rounded-full bg-[#febb40]" />
          <button aria-label="확대" className="h-6 w-6 rounded-full bg-[#34c84a]" />
        </div>
        <h1 className="flex justify-center gap-2.5 pl-2 text-[25px] text-[#807e84]">
          <span className="font-bold text-[#bdbbc0]">무제</span>
          <span>—</span>
          <span>편집됨</span>
        </h1>
      </div>
      <div className="flex h-[50px] items-center">
        <button aria-label="왼쪽 사이드바" className="mr-[110px] ml-6 h-[38px] w-10 border-3 border-l-12 border-[#157efb]" />
        <button className="mr-[62px]">그리드 스냅</button>
        <button className="mr-10">직교모드</button>
        <button className={`${toggle} mr-4 w-32`}>평면모드</button>
        <button className={`${toggle} mr-4 w-[184px]`}>SmartTrack</button>
        <button className={`${toggle} mr-10 w-[120px]`}>검볼</button>
        <button>히스토리</button>
        <div className="ml-auto flex w-[1708px] items-center">
          <button aria-label="선택 필터" className="mr-7">
            <svg viewBox="0 0 44 44" className="h-11 w-11" {...gray}>
              <ellipse cx="22" cy="9" rx="16" ry="5" />
              <path d="M6 9q1 6 12 16v15q4 3 7 0V25Q37 15 38 9M38 1h5v7M1 35v7h6" />
            </svg>
          </button>
          <button aria-label="기록" className="mr-6">
            <svg viewBox="0 0 40 40" className="h-10 w-10" {...gray} stroke="#77757b">
              <circle cx="18" cy="20" r="17" />
              <path d="M18 20h22" stroke="#9f9da2" strokeWidth="3" />
              <path d="M14 15h8v9h-8z" fill="#a9a7ac" stroke="none" />
            </svg>
          </button>
          <button aria-label="레이어 색" className="mr-[18px]">
            <svg viewBox="0 0 44 44" className="h-11 w-11" {...gray}>
              <circle cx="22" cy="22" r="20" />
              <circle cx="22" cy="22" r="10" />
            </svg>
          </button>
          <button className="h-9 w-96 rounded-lg border-2 border-[#444149] pl-7">기본값</button>
          <button aria-label="오른쪽 사이드바" className="mr-6 ml-auto h-[38px] w-10 border-3 border-r-12 border-[#157efb]" />
        </div>
      </div>
    </header>
  )
}

function ToolTabs() {
  return (
    <nav className="flex h-[34px] shrink-0 border-t-2 border-black bg-[#414141]">
      <span className="w-[13px] border-r border-b border-[#8a8a8a]" />
      {toolTabs.map((tab) => (
        <button
          key={tab}
          className={`rounded-tr-md border-r border-[#8a8a8a] px-[21px] pb-1 text-[17px] font-bold ${
            tab === "표시" ? "bg-[#323232] text-[#1f85f5]" : "border-b text-white"
          }`}
        >
          {tab}
        </button>
      ))}
      <span className="flex-1 border-b border-[#6a6a6a]" />
    </nav>
  )
}

function LeftPanel() {
  return (
    <aside className="flex w-[340px] shrink-0 flex-col border-r-2 border-[#807d80]">
      <div className="h-[52px] shrink-0 border-b-2 border-[#626063] bg-[#323232]" />
      <div className="flex-[1007]">
        <input
          aria-label="명령"
          placeholder="명령"
          className="mt-[22px] ml-[18px] block h-[38px] w-[302px] border border-b-2 border-[#3b3841] border-b-[#55525a] bg-[#2c2932] px-1.5 text-[23px] placeholder-[#6a6770]"
        />
        <div className="mt-4 grid w-[300px] grid-cols-5">
          {palette.map((tool) => (
            <button key={tool.name} aria-label={tool.name} className="h-[60px] w-[60px]">
              <svg viewBox="0 0 180 180" className="overflow-visible">
                {tool.art}
                {tool.menu && <path d="M131 136h32l-16 31z" fill="#ececec" />}
              </svg>
            </button>
          ))}
        </div>
      </div>
      <div className="flex-[1073] border-t-2 border-[#9a989b] pt-3">
        <div className="mb-1.5 pl-9">
          <RadioRow label="지속성" checked />
          <RadioRow label="1회성" />
        </div>
        <div className="flex flex-col pl-10">
          {snapItems.map((item) => (
            <CheckRow key={item.label} item={item} />
          ))}
          <CheckRow item={{ label: "모두 사용 안 함" }} className="mt-9 h-10" />
        </div>
      </div>
    </aside>
  )
}

function Swatch() {
  return (
    <button aria-label="색상" className="grid h-8 w-[72px] shrink-0 place-items-center border-2 border-[#56535a] bg-[#3a373e]">
      <span className="h-3 w-[52px] border-2 border-[#9b9b9b] bg-black" />
    </button>
  )
}

function PropertiesPanel() {
  const id = useId()
  const label = "w-[103px] shrink-0 text-right"
  return (
    <section className="flex h-[345px] shrink-0 flex-col">
      <PanelHeader title="속성: 개체" tabs={propertyTabs} />
      <div className="flex min-h-0 flex-1 overflow-hidden">
        <div className="flex flex-1 flex-col pt-[11px] pr-4">
          <div className="flex h-10 shrink-0 items-center gap-[18px]">
            <span className={label}>개체 유형:</span>
            <span>닫힌 돌출</span>
          </div>
          <div className="flex h-14 shrink-0 items-center gap-[18px]">
            <label htmlFor={`${id}n`} className={label}>
              이름:
            </label>
            <input id={`${id}n`} className="h-8 flex-1 border border-b-2 border-[#3b3841] border-b-[#55525a] bg-[#2c2932] px-2" />
          </div>
          <div className="flex h-12 shrink-0 items-center gap-[18px]">
            <label htmlFor={`${id}l`} className={label}>
              레이어:
            </label>
            <Popup id={`${id}l`} value="기본값" className="flex-1" />
          </div>
          <div className="flex h-12 shrink-0 items-center gap-[18px]">
            <label htmlFor={`${id}c`} className={label}>
              표시색:
            </label>
            <Popup id={`${id}c`} value="레이어 기준" className="flex-1" />
            <Swatch />
          </div>
          <div className="flex h-10 shrink-0 items-center gap-[18px]">
            <label htmlFor={`${id}f`} className={label}>
              면 색:
            </label>
            <Popup id={`${id}f`} value="개체로부터" disabled className="flex-1" />
            <Swatch />
          </div>
        </div>
        <div className="w-[30px] border-l border-[#3a373f] bg-[#2c2932] pt-2 pl-1.5">
          <div className="h-[50px] w-4 rounded-full bg-[#6f6c73]" />
        </div>
      </div>
    </section>
  )
}

function Heading({ children }: { children: ReactNode }) {
  return <h3 className="flex h-10 items-center text-[24px]">{children}</h3>
}

function DisplayPanel() {
  const id = useId()
  return (
    <section className="flex flex-1 flex-col border-t-3 border-[#858386]">
      <PanelHeader title="패널: 표시" tabs={displayTabs} />
      <div className="pt-3 pl-[39px]">
        <Heading>뷰포트 설정</Heading>
        <div className="flex h-11 items-center">
          <span className="w-[147px] text-right">활성 뷰포트:</span>
          <span className="pl-[18px] text-[22px]">Perspective</span>
        </div>
        <div className="flex h-12 items-center">
          <label htmlFor={`${id}m`} className="w-[147px] text-right">
            표시 모드:
          </label>
          <Popup id={`${id}m`} value="음영" className="ml-[18px] w-[164px]" />
        </div>
        <div className="mt-1 flex h-14 items-center">
          <label htmlFor={`${id}b`} className="w-[54px]">
            배경
          </label>
          <Popup id={`${id}b`} value="응용 프로그램 설정 사용" className="w-[259px]" />
        </div>
        <div className="mt-4">
          <Heading>일반 설정</Heading>
        </div>
        <div className="mt-[14px] flex flex-col pl-[42px]">
          {shadingItems.map((item) => (
            <CheckRow key={item.label} item={item} />
          ))}
        </div>
        <div className="flex flex-col pl-10">
          <CheckRow item={{ label: "SubD 대칭", checked: true }} className="h-[46px]" />
          {wireItems.map((item) => (
            <CheckRow key={item.label} item={item} />
          ))}
          {annotationItems.map((item) => (
            <CheckRow key={item.label} item={item} className="h-9" />
          ))}
          <div className="flex h-[60px] items-center">
            <label htmlFor={`${id}t`} className="w-[152px]">
              투명도:
            </label>
            <input
              id={`${id}t`}
              defaultValue="0%"
              className="h-8 w-[100px] border border-b-2 border-[#3b3841] border-b-[#66636a] bg-[#2c2932] px-1.5 text-[22px]"
            />
          </div>
        </div>
        <div className="pl-1">
          <Heading>그리드와 축 설정</Heading>
          <CheckRow item={{ label: "Z 축" }} className="h-[52px] pl-9" />
          <Heading>개체 설정</Heading>
          <CheckRow item={{ label: "경계 상자 표시" }} className="h-[52px] pl-9" />
        </div>
        <Heading>클리핑 평면 설정</Heading>
        <div className="mt-1.5 flex flex-col pl-[42px]">
          <CheckRow item={{ label: "가장자리 표시", checked: true }} />
          <CheckRow item={{ label: "채우기 표시", checked: true }} />
        </div>
      </div>
    </section>
  )
}

function StatusBar() {
  return (
    <footer className="flex h-14 shrink-0 items-center border-t-2 border-black bg-[#323232] pl-2.5">
      <button aria-label="기록 보기" className="mr-1.5">
        <svg viewBox="0 0 26 20" className="h-5 w-[26px]" stroke="#8f8f8f" strokeWidth="2">
          <path d="M0 2h3M6 2h20M0 10h3M6 10h20M0 18h3M6 18h20" />
        </svg>
      </button>
      <span>1 개의 닫힌 돌출이 선택에 추가되었습니다.</span>
      <div className="ml-auto flex w-[945px] items-center text-[22px]">
        <span className="w-[71px] text-[21px]">미터</span>
        <span className="relative mr-[29px] flex">
          <select aria-label="좌표계" className="h-8 w-[139px] appearance-none rounded-lg border-2 border-[#6c6c6c] bg-[#323232] pl-2 text-[21px] leading-7">
            <option>구성평면</option>
          </select>
          <svg viewBox="0 0 16 24" className="pointer-events-none absolute top-1 right-2 h-6 w-4" fill="none" stroke="#909090" strokeWidth="2">
            <path d="M4 9l4-4 4 4M4 15l4 4 4-4" />
          </svg>
        </span>
        <span className="w-[164px]">X: -106.17</span>
        <span className="w-[170px]">Y: 77.02</span>
        <span>Z: 0.00</span>
      </div>
    </footer>
  )
}

export default function App() {
  return (
    <div className="h-screen bg-[#1d0b52]">
      <PaletteDefs />
      <div className="relative flex h-full flex-col overflow-hidden rounded-[24px] bg-[#211e26] font-['Inter','Noto_Sans_CJK_KR',sans-serif] text-[21px] font-medium text-[#e2e1e4]">
        <TitleBar />
        <ToolTabs />
        <div className="flex h-[62px] shrink-0 border-b-2 border-black bg-[#323232]">
          {displayTools.map((tool) => (
            <button
              key={tool.name}
              aria-label={tool.name}
              className={`h-[60px] w-[60px] ${tool.active ? "border border-[#6a6a6a] bg-[#505050]" : ""}`}
            >
              <svg viewBox="0 0 60 60">{tool.art}</svg>
            </button>
          ))}
        </div>
        <div className="flex min-h-0 flex-1">
          <LeftPanel />
          <main className="flex min-w-0 flex-1 flex-col">
            <ViewBar />
            <div className="relative min-h-0 flex-1 border-t-2 border-[#a3a09f]">
              <Scene />
              <div className="absolute top-0.5 left-0.5 flex h-[38px] items-center bg-[#03558f] px-2 text-[24px] font-bold text-white">Perspective</div>
            </div>
          </main>
          <aside className="flex w-[1180px] shrink-0 flex-col border-l-3 border-[#757376]">
            <PropertiesPanel />
            <DisplayPanel />
          </aside>
        </div>
        <StatusBar />
        <div className="pointer-events-none absolute inset-0 z-20 rounded-[24px] border-2 border-[#6b696e]" />
      </div>
    </div>
  )
}
